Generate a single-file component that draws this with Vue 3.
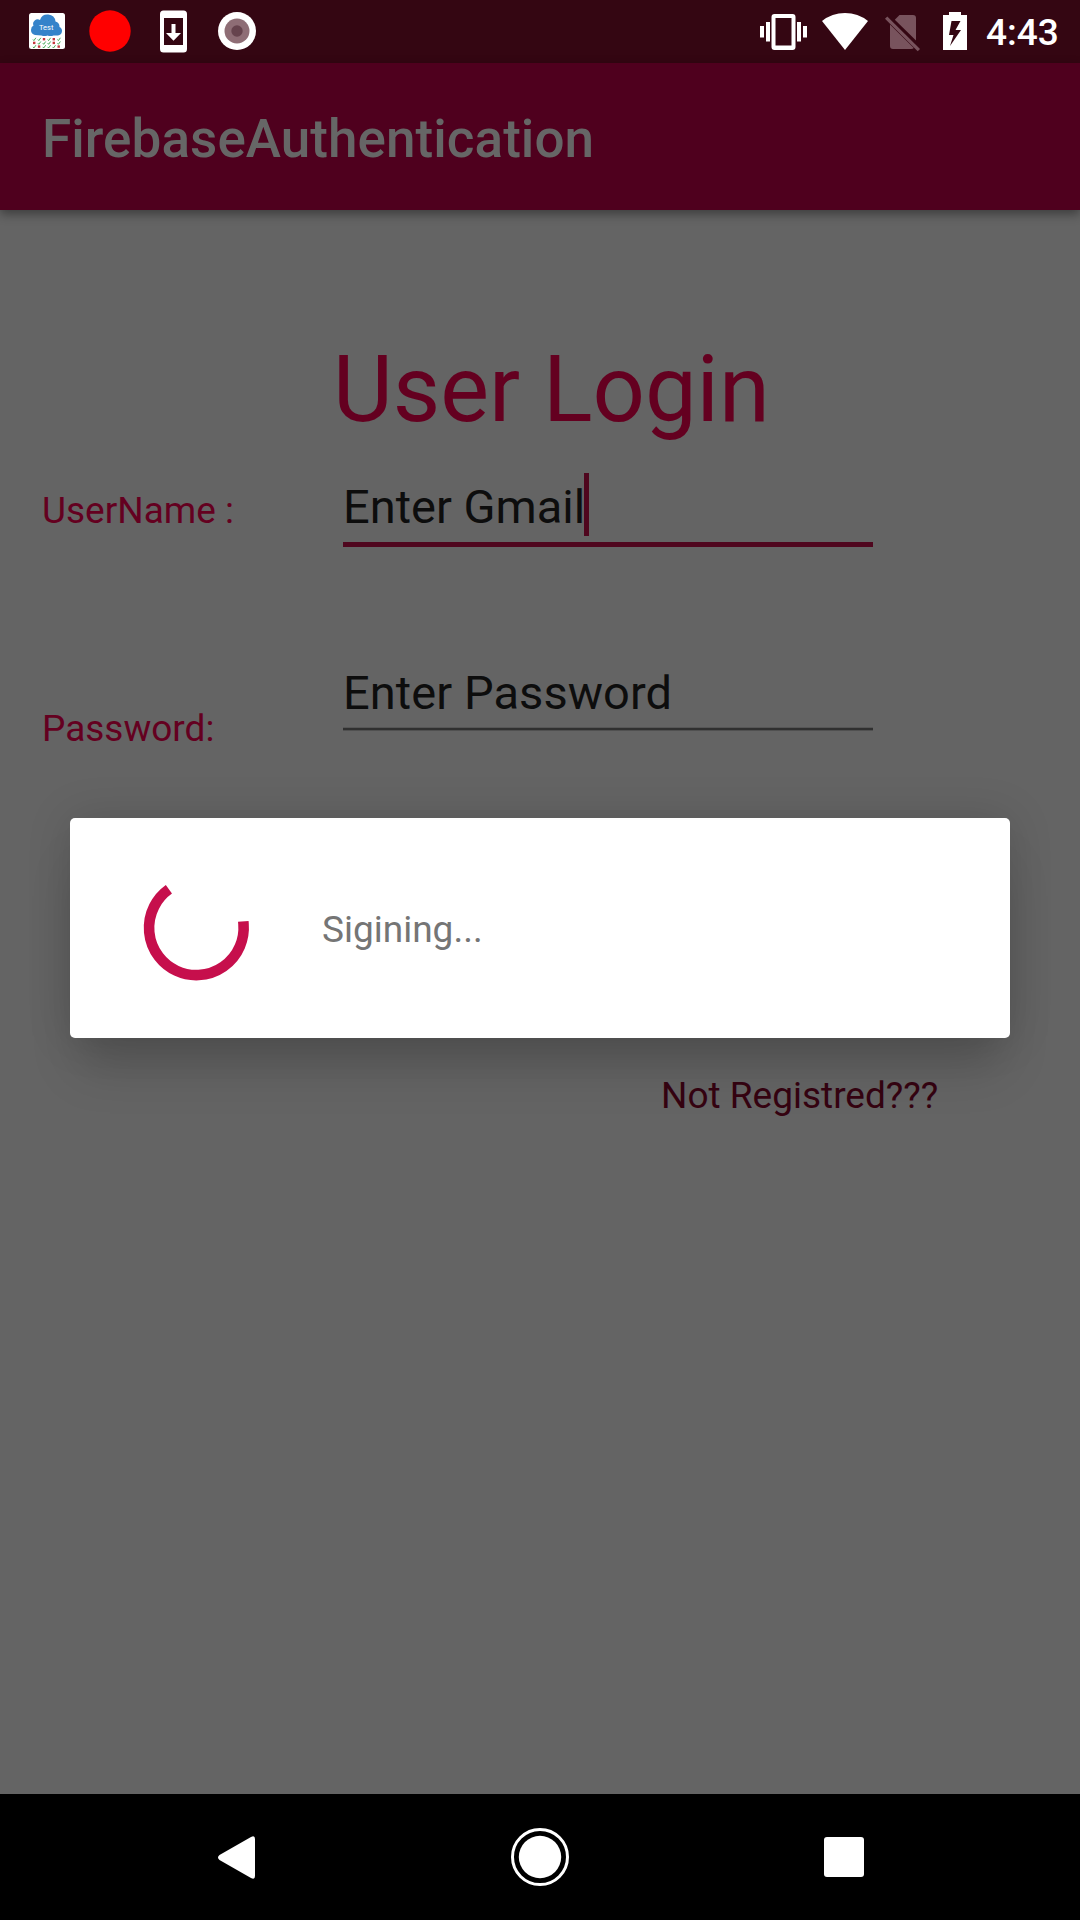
<script setup>
const ticks = []
const crosses = [[2, 0], [4, 0], [0, 1], [4, 1], [1, 2], [5, 2]]
for (let row = 0; row < 3; row++) {
  for (let col = 0; col < 6; col++) {
    ticks.push({
      x: 4 + col * 4.9,
      y: 25 + row * 3.7,
      bad: crosses.some(([c, r]) => c === col && r === row),
    })
  }
}
</script>

<template>
  <div class="phone">
    <header class="status">
      <div class="left-icons">
        <svg class="i-app" width="36" height="36" viewBox="0 0 36 36">
          <rect width="36" height="36" rx="2.500" fill="#fff" />
          <path d="M6 22a5 5 0 0 1-4-5a5 5 0 0 1 2.500-4.400a4.500 4.500 0 0 1 6.500-5.600a8 8 0 0 1 15.500 1.500a5.500 5.500 0 0 1 4 5.500a4.500 4.500 0 0 1-1.500 8.500h-4.500q-3 1-6 0q-3 1-6 0z" fill="#3583ca" />
          <text x="17.200" y="16.500" text-anchor="middle" font-size="7.500" fill="#fff">Test</text>
          <g v-for="(t, i) in ticks" :key="i" :transform="`translate(${t.x} ${t.y})`">
            <rect v-if="t.bad" width="2.400" height="2.400" fill="#c5383f" />
            <path v-else d="M0 1.500l.9 1.100 2-2.800" fill="none" stroke="#37a148" stroke-width="0.900" />
          </g>
        </svg>
        <svg class="i-rec" width="42" height="42" viewBox="0 0 42 42"><circle cx="21" cy="21" r="20.700" fill="#f00" /></svg>
        <svg class="i-download" width="28" height="43" viewBox="0 0 28 43">
          <path fill="#fff" fill-rule="evenodd" d="M3.500.500h20a3.500 3.500 0 0 1 3.500 3.500v35a3.500 3.500 0 0 1-3.500 3.500h-20A3.500 3.500 0 0 1 0 39V4A3.500 3.500 0 0 1 3.500.500zM4 8v27h19V8z" />
          <path fill="#fff" d="M11.500 14h4v9h5.500l-7.500 7.700-7.500-7.700h5.500z" />
        </svg>
        <svg class="i-cam" width="38" height="38" viewBox="0 0 38 38">
          <circle cx="19" cy="19" r="19" fill="#fff" />
          <circle cx="19" cy="19" r="12.500" fill="#8e6d75" />
          <circle cx="19" cy="19" r="5.700" fill="#66434d" />
        </svg>
      </div>
      <div class="right-icons">
        <svg class="i-vib" width="47" height="36" viewBox="0 0 47 36" fill="#fff">
          <path fill-rule="evenodd" d="M14.500 0h18a3 3 0 0 1 3 3v30a3 3 0 0 1-3 3h-18a3 3 0 0 1-3-3V3a3 3 0 0 1 3-3zM15.500 4v27.500h16V4z" />
          <path d="M0 12h4v11.500H0zM6 8h4v19.500H6zM37 8h4v19.500h-4zM43 12h4v11.500h-4z" />
        </svg>
        <svg class="i-wifi" width="46" height="37" viewBox="0 0 46 37"><path fill="#fff" d="M0 8Q10 0 23 0T46 8L23 37z" /></svg>
        <svg class="i-sim" width="36" height="38" viewBox="0 0 36 38" fill="#78535d">
          <path d="M11 4.500L14.500 1H28q3 0 3 3v22.500L9.800 5.700zM5 10.500L28.800 34q-.8 1-2.800 1H8q-3 0-3-3z" />
          <path d="M2.300 2.500L35 35l-2.300 2.300L0 4.800z" />
        </svg>
        <svg class="i-bat" width="24" height="38" viewBox="0 0 24 38">
          <path fill="#fff" fill-rule="evenodd" d="M6 0h12v3h6v35H0V3h6zM8.500 9L6 23h4.500L7 34l11-16h-5.500l5-9z" />
        </svg>
        <span class="clock">4:43</span>
      </div>
    </header>

    <div class="appbar"><h1>FirebaseAuthentication</h1></div>

    <main class="content">
      <h2>User Login</h2>
      <div class="row first">
        <label class="lab-user">UserName :</label>
        <div class="field active"><span>Enter Gmail</span><i class="caret"></i></div>
      </div>
      <div class="row second">
        <label class="lab-pass">Password:</label>
        <div class="field"><span>Enter Password</span></div>
      </div>
      <a class="register">Not Registred???</a>
    </main>

    <nav class="navbar">
      <svg class="n-back" width="38" height="43" viewBox="0 0 38 43"><path fill="#fff" d="M1.500 19L33 1q4-2 4 2v37q0 4-4 2L1.500 24q-3-2.500 0-5z" /></svg>
      <svg class="n-home" width="58" height="58" viewBox="0 0 58 58">
        <circle cx="29" cy="29" r="27.500" fill="none" stroke="#fff" stroke-width="3" />
        <circle cx="29" cy="29" r="21.200" fill="#fff" />
      </svg>
      <svg class="n-recent" width="40" height="40" viewBox="0 0 40 40"><rect width="40" height="40" rx="3" fill="#fff" /></svg>
    </nav>

    <div class="dialog">
      <svg class="spinner" width="126" height="126" viewBox="0 0 126 126">
        <path d="M110.300 56.400L110.500 59A47.300 47.300 0 1 1 35.900 24.300" fill="none" stroke="#c60f4c" stroke-width="10.600" />
      </svg>
      <span>Sigining...</span>
    </div>
  </div>
</template>

<style>
body {
  background: #646464;
}
</style>

<style scoped>
.phone {
  position: relative;
  width: 1080px;
  height: 1920px;
  display: flex;
  flex-direction: column;
  overflow: hidden;
  background: #646464;
  font-family: Roboto, sans-serif;
}
.status {
  height: 63px;
  flex: none;
  display: flex;
  justify-content: space-between;
  background: #340612;
}
.left-icons,
.right-icons {
  display: flex;
  align-items: flex-start;
}
.left-icons { padding-left: 29px; }
.i-app { margin-top: 13px; }
.i-rec { margin: 10px 0 0 24px; }
.i-download { margin: 10px 0 0 29px; }
.i-cam { margin: 12px 0 0 29.500px; }
.right-icons { padding-right: 22px; }
.i-vib { margin-top: 14px; }
.i-wifi { margin: 13px 0 0 15px; }
.i-sim { margin: 14px 0 0 16.500px; }
.i-bat { margin: 12px 0 0 22.500px; }
.clock {
  width: 72px;
  margin-left: 19px;
  line-height: 66px;
  font-size: 37px;
  font-weight: 500;
  color: #fff;
  white-space: nowrap;
}
.appbar {
  position: relative;
  height: 147px;
  flex: none;
  box-sizing: border-box;
  padding: 5px 0 0 42px;
  display: flex;
  align-items: center;
  background: #4f001e;
  box-shadow: 0 4px 10px rgba(0, 0, 0, 0.4);
}
h1 {
  margin: 0;
  font-size: 53px;
  line-height: 62px;
  font-weight: 500;
  letter-spacing: 0.06px;
  color: #666;
}
.content {
  flex: 1;
  display: flex;
  flex-direction: column;
  align-items: flex-start;
}
h2 {
  margin: 126px 0 0 333px;
  font-size: 92px;
  line-height: 108px;
  font-weight: 400;
  color: #640020;
}
.row {
  display: flex;
  align-items: flex-start;
  padding-left: 42px;
}
.first { margin-top: 29px; }
.second { margin-top: 108px; }
label {
  width: 301px;
  font-size: 37px;
  line-height: 44px;
  color: #640020;
}
.lab-user { margin-top: 16px; }
.lab-pass { margin-top: 52px; }
.field {
  width: 530px;
  height: 75px;
  box-sizing: border-box;
  display: flex;
  align-items: flex-start;
  border-bottom: 2px solid #303030;
  box-shadow: 0 1px 0 #505050, inset 0 -1px 0 #565656;
  font-size: 47px;
  letter-spacing: 0.07px;
  color: #0d0d0d;
}
.field span {
  line-height: 56px;
  margin-top: 10px;
}
.active {
  height: 74px;
  border-bottom: 5px solid #4f061e;
  box-shadow: none;
  letter-spacing: 0;
}
.active span { margin-top: 6px; }
.caret {
  width: 5px;
  height: 63px;
  margin-left: -1px;
  background: #4f061e;
}
.register {
  margin: 323px 0 0 661px;
  font-size: 37px;
  line-height: 44px;
  color: #350311;
}
.navbar {
  height: 126px;
  flex: none;
  display: flex;
  align-items: center;
  background: #000;
}
.n-back { margin-left: 217.500px; }
.n-home { margin-left: 255.500px; }
.n-recent { margin-left: 255px; }
.dialog {
  position: absolute;
  left: 70px;
  top: 818px;
  width: 940px;
  height: 220px;
  box-sizing: border-box;
  padding-left: 63px;
  display: flex;
  align-items: center;
  border-radius: 5px;
  background: #fff;
  box-shadow: 0 38px 46px -10px rgba(0, 0, 0, 0.17), 0 0 46px rgba(0, 0, 0, 0.14);
  font-size: 37px;
  line-height: 44px;
  color: #757575;
}
.dialog span { margin: 3px 0 0 63px; }
</style>
